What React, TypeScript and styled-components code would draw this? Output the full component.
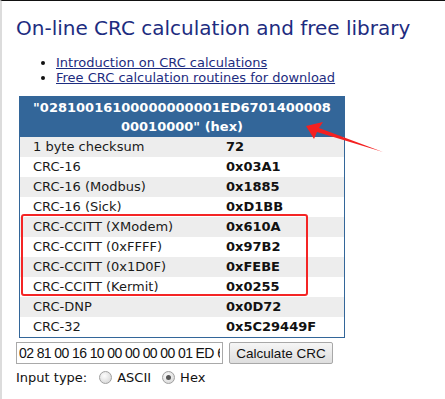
import React from "react";
import styled, { createGlobalStyle } from "styled-components";

const GlobalStyle = createGlobalStyle`
  html, body {
    margin: 0;
    padding: 0;
    background: #fff;
  }
  body {
    font-family: "DejaVu Sans", Verdana, sans-serif;
    color: #111;
  }
`;

const Page = styled.div`
  position: relative;
  width: 445px;
  height: 399px;
  box-sizing: border-box;
  border-top: 1px solid #111;
  border-left: 2px solid #dcdcdc;
  padding-left: 14px;
  overflow: hidden;
`;

const Title = styled.h1`
  margin: 15px 0 0;
  font-size: 20px;
  font-weight: normal;
  color: #1d2c80;
  line-height: 24px;
`;

const LinkList = styled.ul`
  margin: 15px 0 0;
  padding-left: 40px;
  font-size: 13px;
  line-height: 15px;
`;

const LinkItem = styled.li`
  a {
    color: #1d2c80;
    text-decoration: underline;
  }
`;

const TableWrap = styled.div`
  position: relative;
  margin: 11px 0 0 3px;
  width: 326px;
`;

const Table = styled.table`
  width: 326px;
  border-collapse: collapse;
  border: 1px solid #336699;
  font-size: 13px;
`;

const HeadCell = styled.th`
  background: #336699;
  color: #fff;
  font-weight: bold;
  text-align: center;
  line-height: 19px;
  padding: 1px 8px 1px;
`;

const Row = styled.tr<{ $shaded: boolean }>`
  background: ${(p) => (p.$shaded ? "#ededed" : "#fff")};
  height: 20px;
`;

const Label = styled.td`
  padding: 0 0 0 13px;
  width: 193px;
  color: #1a1a1a;
  line-height: 20px;
`;

const Value = styled.td`
  padding: 0;
  font-weight: bold;
  line-height: 20px;
`;

const Highlight = styled.div`
  position: absolute;
  left: 2px;
  top: 118px;
  width: 287px;
  height: 82px;
  box-sizing: border-box;
  border: 2px solid #f42525;
  border-radius: 3px;
  pointer-events: none;
`;

const FormRow = styled.div`
  display: flex;
  align-items: center;
  gap: 6px;
  margin-top: 4px;
`;

const HexInput = styled.input`
  box-sizing: border-box;
  width: 207px;
  height: 22px;
  border: 1px solid #a9a9a9;
  padding: 0 2px;
  font-family: "Liberation Sans", Arial, sans-serif;
  font-size: 14px;
  letter-spacing: -0.6px;
  color: #111;
  background: #fff;
`;

const CalcButton = styled.button`
  box-sizing: border-box;
  width: 104px;
  height: 22px;
  border: 1px solid #a8a8a8;
  border-radius: 2px;
  background: linear-gradient(#f6f6f6, #dedede);
  font-family: "Liberation Sans", Arial, sans-serif;
  font-size: 13.5px;
  color: #111;
  padding: 0;
`;

const TypeRow = styled.div`
  display: flex;
  align-items: center;
  margin-top: 3px;
  font-size: 13px;
  height: 20px;
`;

const TypeLabel = styled.span`
  margin-right: 12px;
`;

const Radio = styled.span<{ $checked: boolean }>`
  position: relative;
  display: inline-block;
  width: 11px;
  height: 11px;
  border-radius: 50%;
  border: 1px solid #a0a0a0;
  background: radial-gradient(circle at 40% 35%, #fdfdfd, #d0d0d0);
  margin-right: 5px;
  &::after {
    content: "";
    display: ${(p) => (p.$checked ? "block" : "none")};
    position: absolute;
    left: 3px;
    top: 3px;
    width: 5px;
    height: 5px;
    border-radius: 50%;
    background: #555;
  }
`;

const Option = styled.label`
  display: inline-flex;
  align-items: center;
  margin-right: 11px;
`;

const Arrow = styled.svg`
  position: absolute;
  left: 0;
  top: 0;
  pointer-events: none;
`;

const rows: [string, string][] = [
  ["1 byte checksum", "72"],
  ["CRC-16", "0x03A1"],
  ["CRC-16 (Modbus)", "0x1885"],
  ["CRC-16 (Sick)", "0xD1BB"],
  ["CRC-CCITT (XModem)", "0x610A"],
  ["CRC-CCITT (0xFFFF)", "0x97B2"],
  ["CRC-CCITT (0x1D0F)", "0xFEBE"],
  ["CRC-CCITT (Kermit)", "0x0255"],
  ["CRC-DNP", "0x0D72"],
  ["CRC-32", "0x5C29449F"],
];

export default function App() {
  return (
    <>
      <GlobalStyle />
      <Page>
        <Title>On-line CRC calculation and free library</Title>
        <LinkList>
          <LinkItem>
            <a href="#intro">Introduction on CRC calculations</a>
          </LinkItem>
          <LinkItem>
            <a href="#lib">Free CRC calculation routines for download</a>
          </LinkItem>
        </LinkList>
        <TableWrap>
          <Table>
            <thead>
              <tr>
                <HeadCell colSpan={2}>
                  "02810016100000000001ED6701400008
                  <br />
                  00010000" (hex)
                </HeadCell>
              </tr>
            </thead>
            <tbody>
              {rows.map(([name, val], i) => (
                <Row key={name} $shaded={i % 2 === 0}>
                  <Label>{name}</Label>
                  <Value>{val}</Value>
                </Row>
              ))}
            </tbody>
          </Table>
          <Highlight />
        </TableWrap>
        <FormRow>
          <HexInput defaultValue="02 81 00 16 10 00 00 00 00 01 ED 67 01 40 00 08 00 01 00 00" />
          <CalcButton>Calculate CRC</CalcButton>
        </FormRow>
        <TypeRow>
          <TypeLabel>Input type:</TypeLabel>
          <Option>
            <Radio $checked={false} />
            ASCII
          </Option>
          <Option>
            <Radio $checked={true} />
            Hex
          </Option>
        </TypeRow>
        <Arrow width="445" height="399" viewBox="0 0 445 399">
          <path
            d="M304 125 L321 121 L317 127 L381 151 L315 131 L312 138 Z"
            fill="#f42020"
          />
        </Arrow>
      </Page>
    </>
  );
}
